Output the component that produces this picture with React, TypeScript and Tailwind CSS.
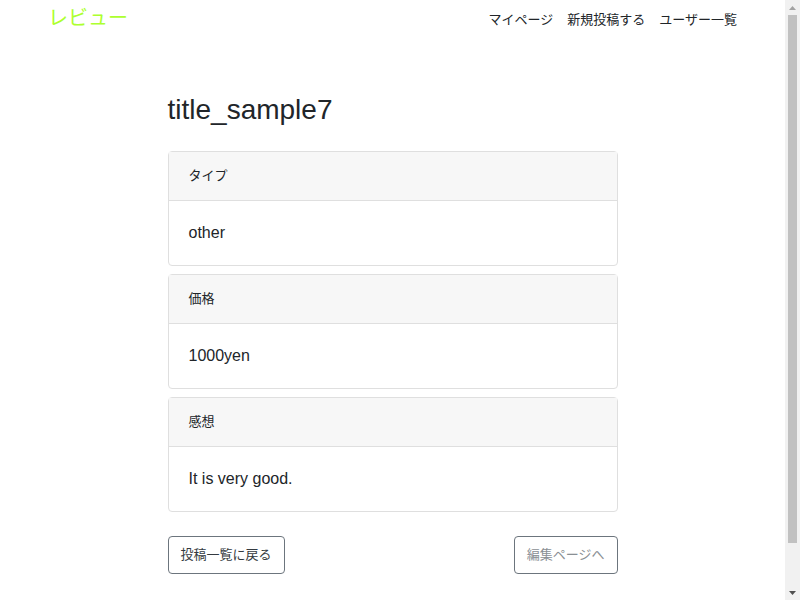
const fields = [
  { label: "タイプ", value: "other" },
  { label: "価格", value: "1000yen" },
  { label: "感想", value: "It is very good." }
];

const navLinks = ["マイページ", "新規投稿する", "ユーザー一覧"];

function Scrollbar() {
  return (
    <div className="flex h-[600px] w-[15px] shrink-0 flex-col items-center bg-[#f1f1f1]">
      <div className="flex h-[15px] items-center justify-center">
        <svg width="7" height="4" viewBox="0 0 7 4">
          <path d="M0 4 L3.5 0 L7 4 Z" fill="#a3a3a3" />
        </svg>
      </div>
      <div className="h-[528px] w-[9px] bg-[#c1c1c1]" />
      <div className="flex-1" />
      <div className="flex h-[15px] items-center justify-center">
        <svg width="7" height="4" viewBox="0 0 7 4">
          <path d="M0 0 L7 0 L3.5 4 Z" fill="#505050" />
        </svg>
      </div>
    </div>
  );
}

export default function App() {
  return (
    <div className="flex h-[600px] overflow-hidden bg-white text-[#212529] font-['Liberation_Sans','Noto_Sans_CJK_JP',sans-serif]">
      <div className="min-w-0 flex-1">
        <header className="flex h-[36px] items-center justify-between px-[48px]">
          <a className="text-[20px] leading-none text-[#adff2f]">レビュー</a>
          <nav className="flex items-center gap-[14px] pt-[4px] text-[13px] text-[#212529]">
            {navLinks.map((link) => (
              <a key={link}>{link}</a>
            ))}
          </nav>
        </header>

        <main className="mx-auto w-[450px] pt-[57px]">
          <h3 className="mb-[24px] text-[28px] leading-[1.2]">title_sample7</h3>

          {fields.map((field) => (
            <div key={field.label} className="mb-2 rounded-[4px] border border-[#dfdfdf]">
              <div className="border-b border-[#dfdfdf] bg-[#f7f7f7] px-[20px] py-[12px] text-[13px] leading-[24px]">
                {field.label}
              </div>
              <div className="p-[20px] text-[16px] leading-[24px]">{field.value}</div>
            </div>
          ))}

          <div className="mt-[16px] flex justify-between pt-[8px]">
            <button className="rounded-[4px] border border-[#6c757d] px-[12px] py-[6px] text-[13px] leading-[24px] text-[#343a40]">
              投稿一覧に戻る
            </button>
            <button className="rounded-[4px] border border-[#6c757d] px-[12px] py-[6px] text-[13px] leading-[24px] text-[#8a8f94]">
              編集ページへ
            </button>
          </div>
        </main>
      </div>
      <Scrollbar />
    </div>
  );
}
